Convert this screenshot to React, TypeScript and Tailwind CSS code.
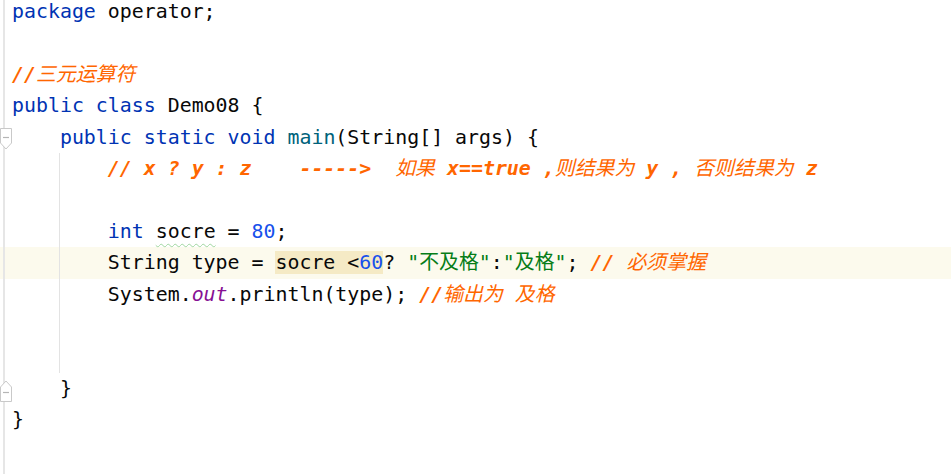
import React from 'react';

const kw = 'text-[#0033b3]';
const num = 'text-[#1750eb]';
const str = 'text-[#067d17]';
const cmt = 'text-[#ff6600] italic font-bold';
const han = 'font-normal';

const Line: React.FC<{ current?: boolean; children?: React.ReactNode }> = ({ current, children }) => (
  <div className={`h-[31.4px] flex items-center pl-3 ${current ? 'bg-[#fcfaed]' : ''}`}>
    <span className="whitespace-pre">{children}</span>
  </div>
);

const FoldStart = () => (
  <svg width="13" height="24" viewBox="0 0 13 24" className="absolute left-0 top-[128px]">
    <path d="M0.5 0.5 H11.5 V15 L6 21 L0.5 15 Z" fill="#fff" stroke="#c9c9c9" />
    <path d="M3 9.5 H9" stroke="#b5b5b5" strokeWidth="1.2" />
  </svg>
);

const FoldEnd = () => (
  <svg width="13" height="24" viewBox="0 0 13 24" className="absolute left-0 top-[378px]">
    <path d="M0.5 23.5 H11.5 V9 L6 3 L0.5 9 Z" fill="#fff" stroke="#c9c9c9" />
    <path d="M3 14.5 H9" stroke="#b5b5b5" strokeWidth="1.2" />
  </svg>
);

const App: React.FC = () => {
  return (
    <div
      className="relative h-[474px] w-full bg-white overflow-hidden text-[#080808] text-[19.9px]"
      style={{ fontFamily: '"DejaVu Sans Mono", "Noto Sans CJK SC", monospace' }}
    >
      <div className="-mt-[3.7px]">
        <Line>
          <span className={kw}>package</span> operator;
        </Line>
        <Line />
        <Line>
          <span className={cmt}>
            //<span className={han}>三元运算符</span>
          </span>
        </Line>
        <Line>
          <span className={kw}>public class</span> Demo08 {'{'}
        </Line>
        <Line>
          {'    '}
          <span className={kw}>public static void</span>{' '}
          <span className="text-[#00627a]">main</span>(String[] args) {'{'}
        </Line>
        <Line>
          {'        '}
          <span className={cmt}>
            {'// x ? y : z    ----->  '}
            <span className={han}>如果</span>
            {' x==true ,'}
            <span className={han}>则结果为</span>
            {' y , '}
            <span className={han}>否则结果为</span>
            {' z'}
          </span>
        </Line>
        <Line />
        <Line>
          {'        '}
          <span className={kw}>int</span>{' '}
          <span className="underline decoration-wavy decoration-[#9fd69f] decoration-1 underline-offset-[5px]">socre</span> ={' '}
          <span className={num}>80</span>;
        </Line>
        <Line current>
          {'        '}String type = <span className="bg-[#f5eac5]">socre &lt;<span className={num}>60</span></span>?{' '}
          <span className={str}>"不及格"</span>:<span className={str}>"及格"</span>;{' '}
          <span className={cmt}>
            {'// '}
            <span className={han}>必须掌握</span>
          </span>
        </Line>
        <Line>
          {'        '}System.<span className="text-[#871094] italic">out</span>.println(type);{' '}
          <span className={cmt}>
            //<span className={han}>输出为 及格</span>
          </span>
        </Line>
        <Line />
        <Line />
        <Line>{'    }'}</Line>
        <Line>{'}'}</Line>
      </div>

      {/* gutter + guides */}
      <div className="absolute left-[3px] top-0 bottom-0 w-[2px] bg-[#e6e6e6]" />
      <div className="absolute left-[59px] top-[153px] h-[220px] w-px bg-[#e3e3e3]" />
      <FoldStart />
      <FoldEnd />
    </div>
  );
};

export default App;
